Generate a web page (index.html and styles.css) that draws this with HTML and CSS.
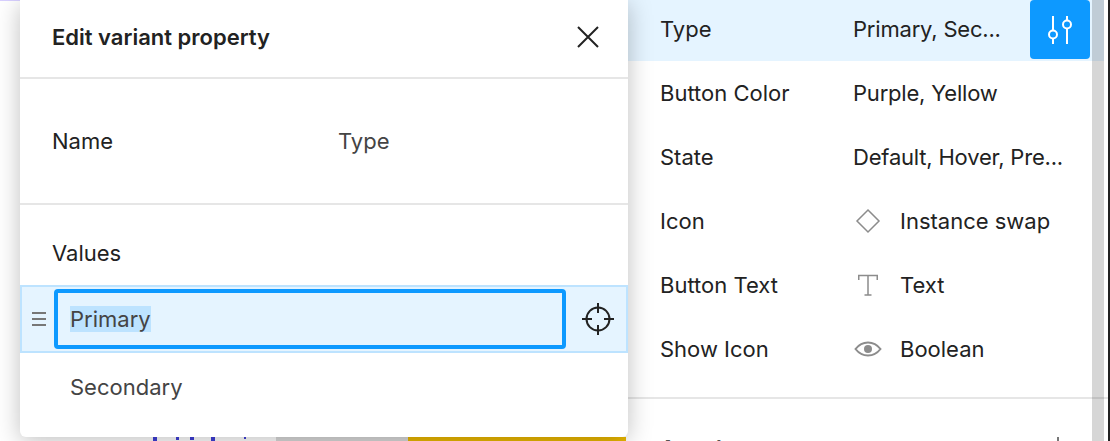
FILE: index.html
```html
<!DOCTYPE html>
<html lang="en">
<head>
<meta charset="utf-8">
<title>Edit variant property</title>
<link rel="stylesheet" href="styles.css">
</head>
<body>
<div class="stage">
  <div class="canvas">
    <div class="canvas-top"></div>
    <div class="canvas-bottom">
      <div class="swatch-white">
        <i class="mark mark-1"></i><i class="mark mark-2"></i><i class="mark mark-3"></i><i class="mark mark-4"></i><i class="mark mark-5"></i>
      </div>
      <div class="swatch-mid"></div>
      <div class="swatch-gold"></div>
    </div>
  </div>
  <aside class="panel">
    <div class="rows">
      <div class="row selected">
        <span class="prop">Type</span>
        <span class="val tight">Primary, Sec...</span>
        <button class="edit-btn" aria-label="Edit">
          <svg width="26" height="30" viewBox="0 0 26 30" fill="none" stroke="#fff" stroke-width="2">
            <path d="M6 1V15.500M6 23.500V29M20 1V5.500M20 13.500V29"/>
            <circle cx="6" cy="19.500" r="4"/>
            <circle cx="20" cy="9.500" r="4"/>
          </svg>
        </button>
      </div>
      <div class="row"><span class="prop">Button Color</span><span class="val tight">Purple, Yellow</span></div>
      <div class="row"><span class="prop">State</span><span class="val tight">Default, Hover, Pre...</span></div>
      <div class="row">
        <span class="prop">Icon</span>
        <span class="val typed">
          <svg class="type-icon" width="30" height="30" viewBox="0 0 30 30" fill="none" stroke="#8c8c8c" stroke-width="1.500"><path d="M15 4L26 15L15 26L4 15Z"/></svg>
          Instance swap
        </span>
      </div>
      <div class="row">
        <span class="prop">Button Text</span>
        <span class="val typed">
          <svg class="type-icon" width="30" height="30" viewBox="0 0 30 30" fill="none" stroke="#8c8c8c" stroke-width="1.500"><path d="M5.750 10V5.500H24.250V10M15 5.500V25M11.500 25H18.500"/></svg>
          Text
        </span>
      </div>
      <div class="row">
        <span class="prop">Show Icon</span>
        <span class="val typed">
          <svg class="type-icon" width="30" height="30" viewBox="0 0 30 30" fill="none" stroke="#8c8c8c" stroke-width="2"><path d="M2.500 15C6 10.500 10 8.500 15 8.500C20 8.500 24 10.500 27.500 15C24 19.500 20 21.500 15 21.500C10 21.500 6 19.500 2.500 15Z"/><circle cx="15" cy="15" r="4" fill="#8c8c8c" stroke="none"/></svg>
          Boolean
        </span>
      </div>
    </div>
    <div class="section-line"></div>
    <div class="section-head">
      <span class="section-title">Auto layout</span>
      <span class="plus"></span>
    </div>
  </aside>
  <div class="edge"></div>
  <div class="scrollbar"></div>
  <section class="modal">
    <header class="modal-head">
      <h2 class="modal-title">Edit variant property</h2>
      <svg class="close" width="24" height="24" viewBox="0 0 24 24" stroke="#222" stroke-width="2" fill="none"><path d="M2 2L22 22M22 2L2 22"/></svg>
    </header>
    <div class="name-row">
      <span class="label">Name</span>
      <span class="name-value">Type</span>
    </div>
    <div class="values">
      <div class="label values-label">Values</div>
      <div class="value-row active">
        <span class="grip">
          <i></i><i></i><i></i>
        </span>
        <div class="value-input"><span class="sel">Primary</span></div>
        <svg class="target" width="34" height="34" viewBox="0 0 34 34" fill="none" stroke="#222" stroke-width="2"><circle cx="17" cy="17" r="11.500"/><path d="M17 1V11M17 23V33M1 17H11M23 17H33"/></svg>
      </div>
      <div class="value-row plain">Secondary</div>
    </div>
  </section>
</div>
</body>
</html>
```
FILE: styles.css
```css
* { box-sizing: border-box; }
html, body { margin: 0; height: 100%; }
body { background: #fff; font-family: Inter, "Liberation Sans", sans-serif; color: #222; overflow: hidden; }

.stage { position: relative; display: flex; width: 1110px; height: 441px; overflow: hidden; }

.canvas { width: 628px; height: 441px; flex: none; display: flex; flex-direction: column; background: #fff; }
.canvas-top { flex: 1; }
.canvas-top::before { content: ""; display: block; width: 20px; height: 1px; background: #d8d0ff; }
.canvas-bottom { height: 4px; flex: none; display: flex; padding-left: 120px; }
.swatch-white { width: 156px; display: flex; }
.mark { display: block; height: 4px; background: #3f3fd8; }
.mark-1 { width: 4px; margin-left: 33px; }
.mark-2 { width: 3px; margin-left: 19px; height: 3px; }
.mark-3 { width: 4px; margin-left: 11px; height: 3px; }
.mark-4 { width: 4px; margin-left: 17px; }
.mark-5 { width: 2px; margin-left: 29px; height: 2px; }
.swatch-mid { width: 132px; background: #dadada; }
.swatch-gold { width: 218px; background: #ebb800; }

.panel { width: 480px; height: 441px; flex: none; display: flex; flex-direction: column; background: #fff; }
.rows { display: flex; flex-direction: column; flex: none; }
.row { height: 64px; width: 476px; display: flex; align-items: center; padding: 0 0 0 32px; font-size: 22px; color: #222; flex: none; white-space: nowrap; }
.row.selected { height: 61px; background: #e5f4ff; padding-bottom: 3px; position: relative; }
.prop { width: 193px; flex: none; }
.val { flex: none; }
.tight { letter-spacing: -0.2px; }
.typed { display: flex; align-items: center; }
.type-icon { margin: 0 17px 0 0; flex: none; }

.edit-btn { position: absolute; right: 14px; top: 0; width: 60px; height: 59px; border: 0; padding: 0; border-radius: 4px; background: #0d99ff; display: flex; align-items: center; justify-content: center; }

.section-line { height: 2px; background: #e6e6e6; margin-top: 16px; flex: none; }
.section-head { display: flex; justify-content: space-between; padding: 35px 49px 0 32px; font-size: 22px; font-weight: 600; color: #555; flex: none; white-space: nowrap; line-height: 28px; }
.plus { width: 2px; height: 16px; margin-top: 3px; background: #777; }

.edge { width: 2px; height: 441px; flex: none; background: #222; }
.scrollbar { position: absolute; left: 1092px; top: 0; width: 12px; height: 441px; background: rgba(0, 0, 0, 0.16); }

.modal { position: absolute; left: 20px; top: 0; width: 608px; height: 437px; background: #fff; border-radius: 0 0 6px 6px; box-shadow: 0 4px 24px rgba(0, 0, 0, 0.25); display: flex; flex-direction: column; }
.modal-head { height: 79px; flex: none; display: flex; align-items: center; justify-content: space-between; padding: 0 28px 4px 32px; border-bottom: 2px solid #e6e6e6; }
.modal-title { margin: 0; font-size: 22px; font-weight: 600; color: #222; }
.close { flex: none; }

.name-row { height: 126px; flex: none; display: flex; align-items: center; padding: 0 32px; border-bottom: 2px solid #e6e6e6; }
.label { font-size: 22px; color: #222; }
.name-row .label { width: 286px; }
.name-value { color: #444; font-size: 22px; }

.values { display: flex; flex-direction: column; }
.values-label { height: 80px; padding: 34px 0 0 32px; line-height: 28px; flex: none; }
.value-row { font-size: 22px; color: #444; }
.value-row.active { height: 68px; display: flex; align-items: center; background: #e5f4ff; border: 2px solid #bde3ff; padding-left: 10px; }
.grip { width: 14px; margin-right: 8px; display: flex; flex-direction: column; gap: 4px; flex: none; }
.grip i { display: block; height: 2px; background: #777; }
.value-input { width: 512px; height: 60px; flex: none; border: 4px solid #0d99ff; border-radius: 4px; display: flex; align-items: center; padding-left: 12px; margin-right: 15px; }
.sel { background: #bde3ff; line-height: 26px; }
.target { flex: none; }
.value-row.plain { padding: 20px 0 0 50px; line-height: 28px; }
```
